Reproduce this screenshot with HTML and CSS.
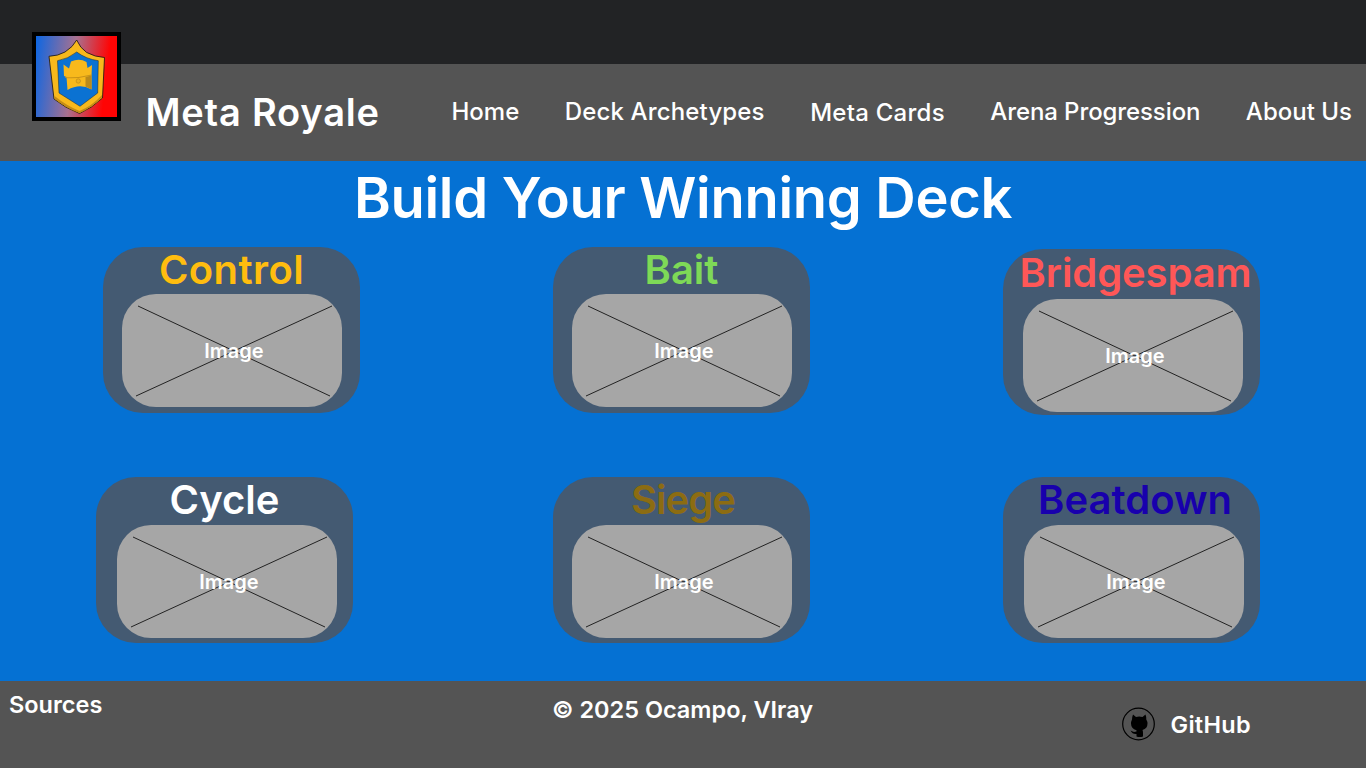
FILE: index.html
```html
<!DOCTYPE html>
<html lang="en">
<head>
<meta charset="utf-8">
<title>Meta Royale</title>
<link rel="stylesheet" href="styles.css">
</head>
<body>
<div class="topbar"></div>
<header class="header">
  <svg class="logo" viewBox="0 0 89 89" aria-label="Meta Royale logo">
    <defs>
      <linearGradient id="bg" x1="0" x2="1" y1="0" y2="0.12">
        <stop offset="0.02" stop-color="#0a66e4"/>
        <stop offset="0.5" stop-color="#a9718f"/>
        <stop offset="0.9" stop-color="#ff0404"/>
      </linearGradient>
    </defs>
    <rect x="2" y="2" width="85" height="85" fill="url(#bg)" stroke="#000" stroke-width="4"/>
    <path d="M44.700 8 Q48 16 54.700 20.500 Q63 25 72.500 25.500 L70.500 66 Q60 76 47.500 81.500 Q33 76 22 67 L17 24.300 Q26 24 33 20 Q41 15 44.700 8Z" fill="#f8b91c" stroke="#17130c" stroke-width="0.800"/>
    <path d="M22.500 64 Q35 74 47.500 79 Q60 74 70 63 L70 65.500 Q60 75.500 47.500 81 Q33 75.500 22.500 66.500Z" fill="#c58c17"/>
    <path d="M44.700 20 Q54 27 66.300 28.700 L65.700 61 L48 74.300 L27 61 L25.500 28.700 Q36 27 44.700 20Z" fill="#0b72d2" stroke="#13263a" stroke-width="0.500"/>
    <path d="M31.500 32.500 L37 36.500 L39 29.500 Q47.500 26 54.500 30 L55.500 36 L60 33 L59.500 44 L59.500 57.500 Q48 51 35.500 58 L34.500 45 L32 44Z" fill="#f8b91c"/>
    <path d="M33 45 Q46 46 59.500 42.500 L59.500 43.500 Q46 47 33.500 46Z" fill="#c99318"/>
    <path d="M53.500 45 L59.500 43.500 L59.500 57.500 L53.500 54.500Z" fill="#bb8a1a"/>
    <circle cx="46.300" cy="49" r="2.200" fill="#eeb01b" stroke="#b5861b" stroke-width="0.600"/>
  </svg>
  <h1 class="brand">Meta Royale</h1>
  <nav class="nav">
    <a class="nav-link" href="#">Home</a>
    <a class="nav-link link-deck" href="#">Deck Archetypes</a>
    <a class="nav-link link-cards" href="#">Meta Cards</a>
    <a class="nav-link link-arena" href="#">Arena Progression</a>
    <a class="nav-link" href="#">About Us</a>
  </nav>
</header>
<main class="main">
  <h2 class="title">Build Your Winning Deck</h2>
  <section class="deck-grid">
    <article class="card">
      <h3 class="card-name name-control">Control</h3>
      <div class="thumb"><svg class="cross" viewBox="0 0 220 113"><path d="M16 12 208 102M14 102 210 12"/></svg><span class="thumb-label">Image</span></div>
    </article>
    <article class="card">
      <h3 class="card-name name-bait">Bait</h3>
      <div class="thumb"><svg class="cross" viewBox="0 0 220 113"><path d="M16 12 208 102M14 102 210 12"/></svg><span class="thumb-label">Image</span></div>
    </article>
    <article class="card card-bridge">
      <h3 class="card-name name-bridge">Bridgespam</h3>
      <div class="thumb thumb-bridge"><svg class="cross" viewBox="0 0 220 113"><path d="M16 12 208 102M14 102 210 12"/></svg><span class="thumb-label">Image</span></div>
    </article>
    <article class="card card-cycle">
      <h3 class="card-name name-cycle">Cycle</h3>
      <div class="thumb thumb-right"><svg class="cross" viewBox="0 0 220 113"><path d="M16 12 208 102M14 102 210 12"/></svg><span class="thumb-label">Image</span></div>
    </article>
    <article class="card">
      <h3 class="card-name name-siege">Siege</h3>
      <div class="thumb"><svg class="cross" viewBox="0 0 220 113"><path d="M16 12 208 102M14 102 210 12"/></svg><span class="thumb-label">Image</span></div>
    </article>
    <article class="card">
      <h3 class="card-name name-beatdown">Beatdown</h3>
      <div class="thumb thumb-right"><svg class="cross" viewBox="0 0 220 113"><path d="M16 12 208 102M14 102 210 12"/></svg><span class="thumb-label">Image</span></div>
    </article>
  </section>
</main>
<footer class="footer">
  <a class="sources" href="#">Sources</a>
  <p class="copyright">© 2025 Ocampo, VIray</p>
  <a class="github" href="#">
    <svg class="github-icon" viewBox="0 0 34 34">
      <circle cx="16.500" cy="17" r="15.800" fill="none" stroke="#000" stroke-width="1.200"/>
      <path d="M11 7.500 L14 10 Q17 9 20.500 10 L23.500 7.500 Q24.500 10 24.300 12.500 Q25.500 14.500 25.500 16.500 Q25.500 21.500 20.500 23 Q21 24 21 26 L21 29.500 Q17.500 30.500 14.500 29.500 L14.500 27 Q10.500 27.500 8.500 23.500 Q11 24.500 12 25 L14.500 24.500 L14.500 23.200 Q9 21.500 9 16.500 Q9 14.500 10 12.500 Q10 10 11 7.500Z" fill="#000"/>
    </svg>
    <span>GitHub</span>
  </a>
</footer>
</body>
</html>
```
FILE: styles.css
```css
* { box-sizing: border-box; }
html, body { height: 100%; }
body {
  margin: 0;
  display: flex;
  flex-direction: column;
  height: 768px;
  overflow: hidden;
  font-family: "Inter", "Liberation Sans", sans-serif;
  color: #fff;
  background: #0571d3;
}
.topbar { height: 64px; background: #222325; flex: none; }
.header {
  position: relative;
  height: 97px;
  flex: none;
  background: #545454;
  display: flex;
  align-items: center;
  padding-bottom: 2px;
}
.logo { position: absolute; left: 32px; top: -32px; width: 89px; height: 89px; }
.brand {
  margin: 0 0 0 145.500px;
  width: 306px;
  font-size: 38px;
  font-weight: 600;
  letter-spacing: 0.8px;
  white-space: nowrap;
}
.nav { display: flex; gap: 45.500px; white-space: nowrap; }
.nav-link {
  color: #fff;
  text-decoration: none;
  font-size: 24px;
  font-weight: 500;
}
.link-deck { letter-spacing: 0.15px; }
.link-cards { letter-spacing: 0.25px; margin-top: 1px; }
.link-arena { letter-spacing: -0.1px; }
.main { flex: 1; display: flex; flex-direction: column; align-items: center; }
.title {
  margin: 4px 0 0;
  font-size: 56px;
  line-height: 66px;
  font-weight: 600;
  letter-spacing: -0.3px;
}
.deck-grid {
  align-self: flex-start;
  margin: 16px 0 0 103px;
  display: grid;
  grid-template-columns: repeat(3, 257px);
  grid-auto-rows: 166px;
  column-gap: 193px;
  row-gap: 64px;
}
.card {
  width: 257px;
  height: 166px;
  background: #445a72;
  border-radius: 40px;
  display: flex;
  flex-direction: column;
  align-items: center;
}
.card-bridge { margin-top: 2px; }
.card-cycle { margin-left: -7px; }
.card-name {
  margin: 0;
  height: 47px;
  line-height: 46px;
  font-size: 40px;
  font-weight: 600;
  white-space: nowrap;
}
.name-control { color: #ffbd0f; letter-spacing: 0.4px; }
.name-bait { color: #7ed957; }
.name-bridge { color: #ff5757; height: 50px; line-height: 48px; padding-left: 8px; letter-spacing: -0.1px; }
.name-cycle { color: #fff; height: 48px; }
.name-siege { color: #8c6c12; height: 48px; padding-left: 3px; letter-spacing: -1px; }
.name-beatdown { color: #1800ad; height: 48px; padding-left: 7px; }
.thumb {
  position: relative;
  align-self: flex-start;
  margin-left: 19px;
  width: 220px;
  height: 113px;
  border-radius: 34px;
  background: #a6a6a6;
  display: flex;
  align-items: center;
  justify-content: center;
}
.thumb-bridge { margin-left: 20px; }
.thumb-right { margin-left: 21px; }
.cross { position: absolute; inset: 0; width: 100%; height: 100%; }
.cross path { fill: none; stroke: #000; stroke-width: 0.8; }
.thumb-label {
  position: relative;
  left: 2px;
  font-size: 20px;
  font-weight: 600;
}
.footer {
  position: relative;
  height: 87px;
  flex: none;
  background: #545454;
  display: grid;
  grid-template-columns: 552px 570px auto;
  font-size: 23.500px;
  font-weight: 600;
}
.sources {
  color: #fff;
  text-decoration: none;
  margin: 10px 0 0 9px;
  line-height: 28px;
}
.copyright { margin: 15px 0 0; line-height: 28px; white-space: nowrap; }
.github {
  display: flex;
  align-items: center;
  gap: 14.500px;
  height: 34px;
  margin-top: 26px;
  color: #fff;
  text-decoration: none;
  letter-spacing: 0.3px;
}
.github-icon { width: 34px; height: 34px; }
```
